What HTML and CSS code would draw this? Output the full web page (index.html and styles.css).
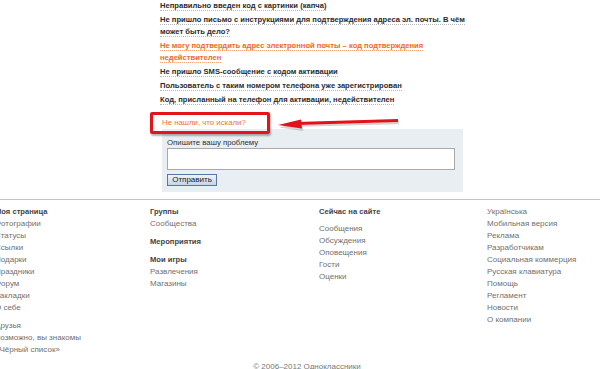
FILE: index.html
```html
<!DOCTYPE html>
<html lang="ru">
<head>
    <meta charset="UTF-8">
    <meta name="viewport" content="width=device-width, initial-scale=1.0">
    <title>Помощь</title>
    <link rel="stylesheet" href="styles.css">
</head>
<body>
    <div class="main">
        <ul class="faq">
            <li><a href="#">Неправильно введен код с картинки (капча)</a></li>
            <li><a href="#">Не пришло письмо с инструкциями для подтверждения адреса эл. почты. В чём может быть дело?</a></li>
            <li><a href="#" class="active">Не могу подтвердить адрес электронной почты – код подтверждения недействителен</a></li>
            <li><a href="#">Не пришло SMS-сообщение с кодом активации</a></li>
            <li><a href="#">Пользователь с таким номером телефона уже зарегистрирован</a></li>
            <li><a href="#">Код, присланный на телефон для активации, недействителен</a></li>
        </ul>

        <div class="not-found">
            <a href="#">Не нашли, что искали?</a>
            <!-- annotation drawn over the page -->
            <div class="mark"></div>
            <svg class="arrow" width="126" height="18" viewBox="0 0 126 18">
                <g opacity="0.25" fill="#555" stroke="#555">
                    <line x1="22" y1="12.5" x2="123" y2="10" stroke-width="2.5"/>
                    <polygon points="3,14.5 26,9 27,18" stroke="none"/>
                </g>
                <line x1="20" y1="10.5" x2="122" y2="7.5" stroke="#e3121a" stroke-width="2.8"/>
                <polygon points="2,12 25,6.5 26,15.5" fill="#e3121a"/>
            </svg>
        </div>

        <form class="problem-box">
            <label for="problem">Опишите вашу проблему</label>
            <textarea id="problem"></textarea>
            <button type="button">Отправить</button>
        </form>
    </div>

    <footer class="footer">
        <div class="footer-cols">
            <div class="col">
                <div class="group">
                    <div class="head">Моя страница</div>
                    <a href="#">Фотографии</a>
                    <a href="#">Статусы</a>
                    <a href="#">Ссылки</a>
                    <a href="#">Подарки</a>
                    <a href="#">Праздники</a>
                    <a href="#">Форум</a>
                    <a href="#">Закладки</a>
                    <a href="#">О себе</a>
                </div>
                <div class="group">
                    <a href="#">Друзья</a>
                    <a href="#">Возможно, вы знакомы</a>
                    <a href="#">«Чёрный список»</a>
                </div>
            </div>
            <div class="col">
                <div class="group">
                    <div class="head">Группы</div>
                    <a href="#">Сообщества</a>
                </div>
                <div class="group">
                    <div class="head">Мероприятия</div>
                </div>
                <div class="group">
                    <div class="head">Мои игры</div>
                    <a href="#">Развлечения</a>
                    <a href="#">Магазины</a>
                </div>
            </div>
            <div class="col">
                <div class="head">Сейчас на сайте</div>
                <div class="group">
                    <a href="#">Сообщения</a>
                    <a href="#">Обсуждения</a>
                    <a href="#">Оповещения</a>
                    <a href="#">Гости</a>
                    <a href="#">Оценки</a>
                </div>
            </div>
            <div class="col">
                <a href="#">Українська</a>
                <a href="#">Мобильная версия</a>
                <a href="#">Реклама</a>
                <a href="#">Разработчикам</a>
                <a href="#">Социальная коммерция</a>
                <a href="#">Русская клавиатура</a>
                <a href="#">Помощь</a>
                <a href="#">Регламент</a>
                <a href="#">Новости</a>
                <a href="#">О компании</a>
            </div>
        </div>
        <div class="copyright">© 2006–2012 Одноклассники</div>
    </footer>
</body>
</html>
```

FILE: styles.css
```css
body {
    margin: 0;
    padding: 0;
    font-family: "Liberation Sans", Arial, sans-serif;
    font-size: 7.8px;
    background-color: #fff;
    color: #333;
}
a {
    text-decoration: none;
}
.main {
    margin-left: 160px;
    width: 310px;
}
.faq {
    list-style: none;
    margin: 0;
    padding: 0;
}
.faq li {
    line-height: 12px;
    margin-bottom: 2px;
}
.faq a {
    font-size: 7.6px;
    font-weight: bold;
    color: #2b2b2b;
    border-bottom: 1px dotted #b8b8b8;
}
.faq a.active {
    color: #f06a1e;
    border-bottom-color: #f3a878;
}
.not-found {
    position: relative;
    margin-top: 11px;
    padding-left: 2px;
    line-height: 12px;
}
.not-found a {
    color: #f07432;
}
.mark {
    position: absolute;
    left: -10px;
    top: -5px;
    width: 114px;
    height: 16px;
    border: 3px solid #e3141b;
    border-radius: 2px;
    box-shadow: 1px 2px 2px rgba(0, 0, 0, 0.3);
}
.arrow {
    position: absolute;
    left: 116px;
    top: -4px;
}
.problem-box {
    margin: 0 0 0 2px;
    width: 291px;
    padding: 8px 5px 6px 5px;
    background-color: #e8eef1;
}
.problem-box label {
    display: block;
    line-height: 11px;
    color: #333;
}
.problem-box textarea {
    display: block;
    box-sizing: border-box;
    width: 288px;
    height: 22px;
    margin: 0;
    padding: 2px;
    resize: none;
    border: 1px solid #a9a9a9;
    background-color: #fff;
}
.problem-box button {
    display: block;
    box-sizing: border-box;
    margin-top: 4px;
    width: 50px;
    height: 12px;
    padding: 0;
    font-family: "Liberation Sans", Arial, sans-serif;
    font-size: 8px;
    line-height: 10px;
    color: #1a1a1a;
    border: 1px solid #5877a6;
    background: linear-gradient(#eef3fb, #c4d4ec);
}
.footer {
    margin-top: 7px;
    border-top: 1px solid #c4c4c4;
    padding-top: 6px;
    font-size: 8px;
}
.footer-cols {
    display: grid;
    grid-template-columns: 155px 169px 168px 1fr;
    margin-left: -5px;
    line-height: 12px;
}
.col a {
    display: block;
    color: #707070;
}
.col .head {
    font-size: 7.6px;
    font-weight: bold;
    color: #444;
}
.col .group + .group {
    margin-top: 6px;
}
.col .head + .group {
    margin-top: 5px;
}
.copyright {
    margin-top: 5px;
    padding-left: 14px;
    text-align: center;
    line-height: 12px;
    color: #777;
}
```
